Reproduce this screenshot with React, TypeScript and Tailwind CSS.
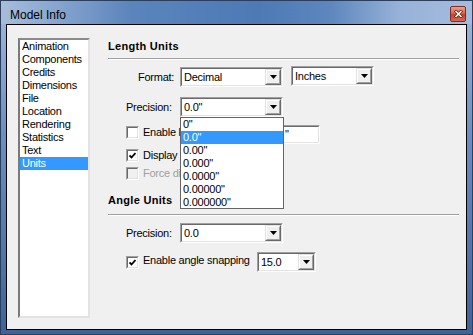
import React from "react";

const font = "font-['Liberation_Sans',Arial,sans-serif]";

function Arrow() {
  return (
    <svg width="7" height="4" viewBox="0 0 7 4">
      <path d="M0 0h7L3.5 4z" fill="#000" />
    </svg>
  );
}

function Combo({ value, className }: { value: string; className: string }) {
  return (
    <div className={`${className} border border-t-[#a0a0a0] border-l-[#a0a0a0] border-b-white border-r-white`}>
      <div className="h-full flex border border-t-[#696969] border-l-[#696969] border-b-[#e3e3e3] border-r-[#e3e3e3] bg-white">
        <div className="flex-1 pl-[2px] flex items-center overflow-hidden whitespace-nowrap">{value}</div>
        <div className="w-[16px] border border-t-[#e3e3e3] border-l-[#e3e3e3] border-b-[#696969] border-r-[#696969]">
          <div className="h-full flex items-center justify-center border border-t-white border-l-white border-b-[#a0a0a0] border-r-[#a0a0a0] bg-[#f0f0f0]">
            <Arrow />
          </div>
        </div>
      </div>
    </div>
  );
}

function Check({ checked, disabled }: { checked?: boolean; disabled?: boolean }) {
  return (
    <div className="w-[13px] h-[13px] shrink-0 border border-t-[#a0a0a0] border-l-[#a0a0a0] border-b-white border-r-white">
      <div
        className={`h-full flex items-center justify-center border border-t-[#696969] border-l-[#696969] border-b-[#e3e3e3] border-r-[#e3e3e3] ${
          disabled ? "bg-[#f0f0f0]" : "bg-white"
        }`}
      >
        {checked && (
          <svg width="7" height="7" viewBox="0 0 7 7">
            <path d="M0.5 3.5L2.5 5.5L6.5 1" stroke="#000" strokeWidth="1.8" fill="none" />
          </svg>
        )}
      </div>
    </div>
  );
}

const sections = [
  "Animation",
  "Components",
  "Credits",
  "Dimensions",
  "File",
  "Location",
  "Rendering",
  "Statistics",
  "Text",
  "Units",
];

const precisions = ['0"', '0.0"', '0.00"', '0.000"', '0.0000"', '0.00000"', '0.000000"'];

export default function App() {
  return (
    <div
      className={`${font} w-[473px] h-[335px] flex flex-col border border-[#2b3f5c] bg-[linear-gradient(180deg,#a3badb_0%,#6a8fc2_40%,#3d6498_100%)] text-[11px] tracking-[-0.25px] text-black`}
    >
      {/* title bar */}
      <div className="h-[23px] shrink-0 flex bg-[linear-gradient(90deg,#a7bddb_0%,#86a5cf_12%,#5a84bb_28%,#4d7ab5_55%,#5d87bd_70%,#98b3d9_85%,#a4bbdc_100%)]">
        <div className="flex-1 pl-[9px] pt-[4px] flex items-center text-[12px] tracking-normal">Model Info</div>
        <div className="mt-[5px] mr-[6px] w-[16px] h-[16px] rounded-[2px] border border-[#7d3022] bg-[linear-gradient(180deg,#eaa08c_0%,#d9664c_45%,#c5412a_55%,#d86a50_100%)] flex items-center justify-center">
          <svg width="9" height="8" viewBox="0 0 9 8">
            <path d="M1 0.5L8 7.5M8 0.5L1 7.5" stroke="#5b1f15" strokeWidth="3" />
            <path d="M1.5 1L7.5 7M7.5 1L1.5 7" stroke="#fff" strokeWidth="1.6" />
          </svg>
        </div>
      </div>

      {/* client area */}
      <div className="flex-1 mx-[5px] mb-[4px] border border-black bg-[#f0f0f0] flex pl-[11px] pt-[13px] pr-[7px]">
        {/* section list */}
        <div className="w-[72px] h-[280px] shrink-0 border-l-2 border-t-2 border-l-[#7a7a7a] border-t-[#8a8a8a] border-r-2 border-b-2 border-r-[#e3e3e3] border-b-[#e3e3e3] bg-white">
          {sections.map((s) => (
            <div
              key={s}
              className={`h-[13px] leading-[13px] pl-[2px] whitespace-nowrap ${
                s === "Units" ? "bg-[#3399ff] text-white" : ""
              }`}
            >
              {s}
            </div>
          ))}
        </div>

        {/* right panel */}
        <div className="flex-1 ml-[18px] flex flex-col">
          <div className="h-[16px] flex items-center font-bold tracking-[0.3px]">Length Units</div>
          <div className="mt-[4px] h-[2px] border-t border-t-[#a0a0a0] border-b border-b-white" />

          <div className="mt-[7px] h-[20px] flex items-center">
            <div className="w-[72px] pl-[30px]">Format:</div>
            <Combo value="Decimal" className="w-[103px] h-[20px]" />
            <Combo value="Inches" className="ml-[8px] w-[83px] h-[20px] -mt-[2px]" />
          </div>

          <div className="mt-[10px] h-[20px] flex items-center">
            <div className="w-[72px] pl-[18px]">Precision:</div>
            <div className="relative">
              <Combo value='0.0"' className="w-[103px] h-[20px]" />
              <div className="absolute left-0 top-full z-10 w-[104px] h-[92px] border border-[#646464] bg-white">
                {precisions.map((p) => (
                  <div
                    key={p}
                    className={`h-[13px] leading-[13px] pl-[2px] ${
                      p === '0.0"' ? "bg-[#3399ff] text-white" : ""
                    }`}
                  >
                    {p}
                  </div>
                ))}
              </div>
            </div>
          </div>

          <div className="mt-[8px] h-[19px] flex items-start pl-[18px]">
            <div className="mt-[1px]">
              <Check />
            </div>
            <div className="ml-[4px] w-[117px] h-[15px] flex items-center">
              <div className="w-[40px] overflow-hidden whitespace-nowrap">Enable length snapping</div>
            </div>
            <div className="w-[60px] h-[19px] border border-t-[#a0a0a0] border-l-[#a0a0a0] border-b-white border-r-white">
              <div className="h-full border border-t-[#696969] border-l-[#696969] border-b-[#e3e3e3] border-r-[#e3e3e3] bg-white pl-[23px] flex items-center">
                "
              </div>
            </div>
          </div>

          <div className="mt-[5px] h-[13px] flex items-center pl-[18px]">
            <Check checked />
            <div className="ml-[4px] w-[40px] overflow-hidden whitespace-nowrap">Display units format</div>
          </div>

          <div className="mt-[5px] h-[13px] flex items-center pl-[18px]">
            <Check disabled />
            <div className="ml-[4px] w-[40px] overflow-hidden whitespace-nowrap text-[#a0a0a0]">Force display of 0"</div>
          </div>

          <div className="mt-[12px] h-[16px] flex items-center font-bold tracking-[0.3px]">Angle Units</div>
          <div className="mt-[6px] h-[2px] border-t border-t-[#a0a0a0] border-b border-b-white" />

          <div className="mt-[7px] h-[20px] flex items-center">
            <div className="w-[72px] pl-[18px]">Precision:</div>
            <Combo value="0.0" className="w-[103px] h-[20px]" />
          </div>

          <div className="mt-[9px] h-[20px] flex items-center pl-[18px]">
            <Check checked />
            <div className="ml-[4px] w-[114px] whitespace-nowrap -mt-[3px]">Enable angle snapping</div>
            <Combo value="15.0" className="w-[59px] h-[20px]" />
          </div>
        </div>
      </div>
    </div>
  );
}
